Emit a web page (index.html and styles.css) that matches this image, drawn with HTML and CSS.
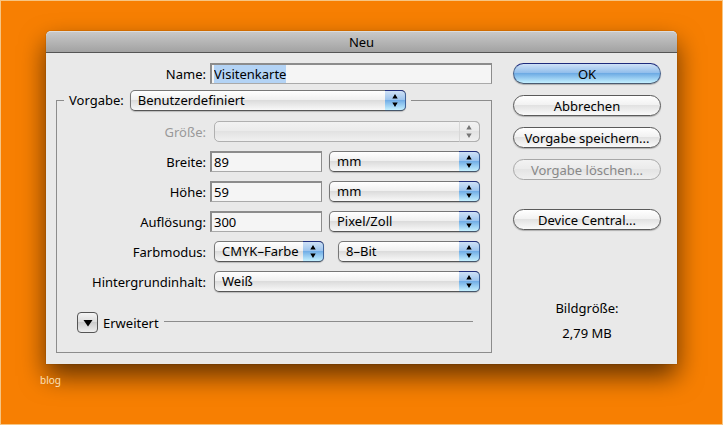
FILE: index.html
```html
<!DOCTYPE html>
<html lang="de">
<head>
    <meta charset="UTF-8">
    <meta name="viewport" content="width=device-width, initial-scale=1.0">
    <title>Neu</title>
    <link rel="stylesheet" href="styles.css">
</head>
<body>
    <form class="dialog">
        <h1 class="titlebar">Neu</h1>

        <div class="content">
            <div class="settings">
                <div class="row">
                    <label for="name">Name:</label>
                    <input type="text" id="name" value="Visitenkarte">
                </div>

                <!-- Vorgabe -->
                <fieldset>
                    <legend>
                        <label for="preset">Vorgabe:</label>
                        <span class="popup">
                            <select id="preset"><option>Benutzerdefiniert</option></select>
                        </span>
                    </legend>

                    <div class="row wide disabled">
                        <label for="size">Größe:</label>
                        <span class="popup">
                            <select id="size" disabled><option></option></select>
                        </span>
                    </div>
                    <div class="row">
                        <label for="width">Breite:</label>
                        <div class="measure">
                            <input type="text" id="width" value="89">
                            <span class="popup">
                                <select aria-label="Einheit Breite"><option>mm</option></select>
                            </span>
                        </div>
                    </div>
                    <div class="row">
                        <label for="height">Höhe:</label>
                        <div class="measure">
                            <input type="text" id="height" value="59">
                            <span class="popup">
                                <select aria-label="Einheit Höhe"><option>mm</option></select>
                            </span>
                        </div>
                    </div>
                    <div class="row">
                        <label for="resolution">Auflösung:</label>
                        <div class="measure">
                            <input type="text" id="resolution" value="300">
                            <span class="popup">
                                <select aria-label="Einheit Auflösung"><option>Pixel/Zoll</option></select>
                            </span>
                        </div>
                    </div>
                    <div class="row wide">
                        <label for="mode">Farbmodus:</label>
                        <div class="modes">
                            <span class="popup">
                                <select id="mode"><option>CMYK–Farbe</option></select>
                            </span>
                            <span class="popup">
                                <select aria-label="Bittiefe"><option>8–Bit</option></select>
                            </span>
                        </div>
                    </div>
                    <div class="row wide">
                        <label for="background">Hintergrundinhalt:</label>
                        <span class="popup">
                            <select id="background"><option>Weiß</option></select>
                        </span>
                    </div>

                    <div class="advanced">
                        <button type="button" class="toggle" id="advanced" aria-label="Erweitert einblenden">
                            <svg width="10" height="8" viewBox="0 0 10 8"><path d="M0.5 1h9L5 7.5z"/></svg>
                        </button>
                        <label for="advanced">Erweitert</label>
                        <hr>
                    </div>
                </fieldset>
            </div>

            <div class="actions">
                <button type="button" class="pill default">OK</button>
                <button type="button" class="pill">Abbrechen</button>
                <button type="button" class="pill">Vorgabe speichern...</button>
                <button type="button" class="pill" disabled>Vorgabe löschen...</button>
                <button type="button" class="pill central">Device Central...</button>
                <div class="filesize">
                    <p>Bildgröße:</p>
                    <p>2,79 MB</p>
                </div>
            </div>
        </div>
    </form>
    <div class="credit">blog</div>

    <script>
        document.getElementById("name").focus();
        document.getElementById("name").select();
    </script>
</body>
</html>
```
FILE: styles.css
```css
*,
*::after {
    box-sizing: border-box;
}

body {
    margin: 0;
    min-height: 100vh;
    padding: 30px 45px 0;
    border: 1px solid #f6c583;
    background-color: #f77f02;
    font-family: "Noto Sans", "Open Sans", sans-serif;
    font-size: 13px;
    line-height: 20px;
    color: #000;
}

.dialog {
    border-radius: 5px 5px 0 0;
    background-color: #e9e9e9;
    box-shadow: 0 0 1px rgba(0, 0, 0, 0.6), 0 12px 26px rgba(0, 0, 0, 0.6);
}

.titlebar {
    margin: 0;
    height: 22px;
    border-top: 1px solid #dcdcdc;
    border-bottom: 1px solid #555;
    border-radius: 5px 5px 0 0;
    background: linear-gradient(#c8c8c8, #a2a2a2);
    font-size: 13px;
    font-weight: normal;
    text-align: center;
}

.content {
    display: flex;
    gap: 21px;
    padding: 10px 16px 11px 10px;
}

.settings {
    flex: 1;
    min-width: 0;
}

.row {
    display: flex;
    gap: 4px;
    height: 21px;
    margin-bottom: 9px;
}

.row > label {
    flex: none;
    width: 149px;
    text-align: right;
    line-height: 22px;
}

.settings > .row {
    margin-bottom: 6px;
    padding-left: 1px;
}

.wide {
    gap: 8px;
}

.disabled {
    color: #999;
}

input {
    flex: 1;
    min-width: 0;
    height: 21px;
    padding: 0 2px;
    border: 2px solid #8c8c8c;
    border-width: 2px 1px 1px 2px;
    border-color: #8c8c8c #8c8c8c #aaa #8c8c8c;
    background-color: #f5f5f5;
    font: inherit;
    outline: none;
}

input::selection {
    background-color: #b3d3f5;
    color: #000;
}

fieldset {
    min-width: 0;
    margin: 0;
    padding: 10px 11px 19px 0;
    border: 1px solid #8c8c8c;
}

legend {
    display: flex;
    gap: 6px;
    width: 82%;
    margin-left: 7px;
    padding: 0 5px;
}

.measure,
.modes {
    display: grid;
    flex: 1;
    grid-template-columns: 112fr 151fr;
    gap: 7px;
}

.modes {
    grid-template-columns: 110fr 142fr;
    gap: 14px;
}

.popup {
    position: relative;
    display: flex;
    flex: 1;
    min-width: 0;
    height: 21px;
}

select {
    appearance: none;
    width: 100%;
    height: 21px;
    padding: 0 22px 0 7px;
    border: 1px solid #777;
    border-bottom-color: #555;
    border-radius: 5px;
    background: linear-gradient(#fff, #f0f0f0 45%, #dcdcdc 50%, #f8f8f8);
    box-shadow: 0 1px 1px rgba(0, 0, 0, 0.2);
    color: #000;
    font: inherit;
    line-height: 19px;
    outline: none;
}

/* blue cap with the two arrows */
.popup::after {
    content: "";
    position: absolute;
    top: 0;
    right: 0;
    width: 21px;
    height: 21px;
    border: 1px solid #30509a;
    border-color: #22307c #3f6298 #45566b;
    border-left: 0;
    border-radius: 0 5px 5px 0;
    background:
        url("data:image/svg+xml,%3Csvg xmlns='http://www.w3.org/2000/svg' width='6' height='13' viewBox='0 0 6 13'%3E%3Cpath d='M3 0l2.7 4.5H.3zM3 13L.3 8.500h5.400z'/%3E%3C/svg%3E") 7px 3px no-repeat,
        linear-gradient(#cfe1f6, #9ec5ee 45%, #72aee6 50%, #c4f0ff);
    pointer-events: none;
}

.disabled select {
    border-color: #b0b0b0;
    background: linear-gradient(#f2f2f2, #ebebeb 45%, #e2e2e2 50%, #f0f0f0);
    box-shadow: none;
    opacity: 1;
}

.disabled .popup::after {
    border-color: #b0b0b0;
    border-left: 1px solid #d8d8d8;
    background:
        url("data:image/svg+xml,%3Csvg xmlns='http://www.w3.org/2000/svg' width='6' height='13' viewBox='0 0 6 13'%3E%3Cpath fill='%23777' d='M3 0l2.7 4.5H.3zM3 13L.3 8.500h5.400z'/%3E%3C/svg%3E") 6px 3px no-repeat;
}

.advanced {
    display: flex;
    align-items: center;
    gap: 5px;
    margin-top: 20px;
    padding: 0 7px 0 20px;
}

.advanced hr {
    flex: 1;
    height: 1px;
    margin: 0 0 3px;
    border: 0;
    background-color: #8c8c8c;
}

button {
    font: inherit;
    color: #000;
}

.toggle {
    display: flex;
    align-items: center;
    justify-content: center;
    width: 21px;
    height: 21px;
    padding: 0;
    border: 1px solid #555;
    border-radius: 4px;
    background: linear-gradient(#f5f5f5, #ddd 45%, #ccc 50%, #eee);
}

.actions {
    display: flex;
    flex: none;
    flex-direction: column;
    gap: 11px;
    width: 148px;
}

.pill {
    height: 21px;
    padding: 0 4px;
    border: 1px solid #5a5a5a;
    border-radius: 11px;
    background: linear-gradient(#fff, #f2f2f2 45%, #e2e2e2 50%, #fafafa);
    box-shadow: 0 1px 1px rgba(0, 0, 0, 0.25);
    line-height: 18px;
    white-space: nowrap;
}

.pill:disabled {
    border-color: #a8a8a8;
    background: linear-gradient(#f2f2f2, #ebebeb 45%, #e4e4e4 50%, #efefef);
    box-shadow: none;
    color: #888;
}

.default {
    border-color: #1d2a7c #44608c #4a5a70;
    background: linear-gradient(#cfe1f6, #93bfec 45%, #6eabe4 50%, #c4f0ff);
}

.central {
    margin-top: 18px;
}

.filesize {
    margin-top: auto;
    padding-bottom: 10px;
    text-align: center;
}

.filesize p {
    margin: 5px 0 0;
}

.credit {
    margin: 9px 0 0 -6px;
    font-size: 10px;
    line-height: 14px;
    color: #fbe0b8;
}
```
